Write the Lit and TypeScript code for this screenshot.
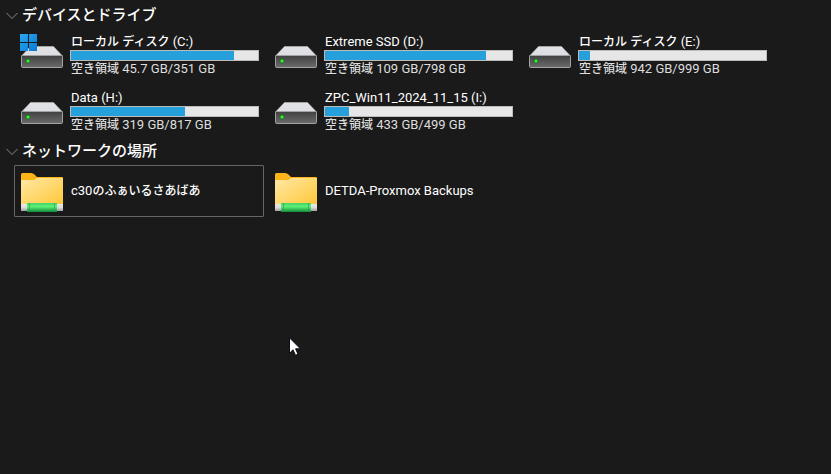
import { LitElement, html, css, svg, nothing } from "lit";
import { customElement, property, state } from "lit/decorators.js";
import { styleMap } from "lit/directives/style-map.js";

interface Drive {
  name: string;
  free: number;
  total: number;
  system?: boolean;
}

const DRIVES: Drive[] = [
  { name: "ローカル ディスク (C:)", free: 45.7, total: 351, system: true },
  { name: "Extreme SSD (D:)", free: 109, total: 798 },
  { name: "ローカル ディスク (E:)", free: 942, total: 999 },
  { name: "Data (H:)", free: 319, total: 817 },
  { name: "ZPC_Win11_2024_11_15 (I:)", free: 433, total: 499 },
];

const PLACES = ["c30のふぁいるさあばあ", "DETDA-Proxmox Backups"];

/** Wraps the Japanese runs of a label, which are set smaller and heavier than the Latin ones. */
const label = (text: string) =>
  text
    .split(/([\u3040-\u30ff\u4e00-\u9fff]+)/)
    .filter((run) => run)
    .map((run) => (run.charCodeAt(0) > 0x3000 ? html`<span class="ja">${run}</span>` : run));

const tileStyles = css`
  :host {
    display: block;
  }
  .tile {
    box-sizing: border-box;
    width: 100%;
    min-height: 52px;
    display: flex;
    align-items: center;
    gap: 6px;
    padding: 0 4px 0 5px;
    border: 1px solid transparent;
    border-radius: 1px;
    background: none;
    color: #fff;
    font: inherit;
    text-align: left;
  }
  .tile.focused {
    border-color: #666;
  }
  .icon {
    flex: none;
    width: 44px;
    height: 44px;
  }
  .text {
    flex: 1;
    min-width: 0;
    display: flex;
    flex-direction: column;
  }
  .line {
    height: 16px;
    line-height: 16px;
    padding-left: 1px;
    white-space: pre;
  }
  .ja {
    font-size: 12px;
    font-weight: 500;
  }
`;

@customElement("drive-tile")
export class DriveTile extends LitElement {
  @property({ attribute: false }) drive!: Drive;

  static styles = [
    tileStyles,
    css`
      .bar {
        box-sizing: border-box;
        height: 11px;
        border: 1px solid #bcbcbc;
        background: #e6e6e6;
      }
      .fill {
        height: 100%;
        background: #26a0da;
      }
      .free {
        color: #dedede;
      }
    `,
  ];

  render() {
    const { name, free, total, system } = this.drive;
    const used = Math.round(((total - free) / total) * 100);
    return html`
      <button class="tile">
        <svg class="icon" viewBox="0 0 44 44" aria-hidden="true">
          <defs>
            <linearGradient id="front" x1="0" y1="0" x2="0" y2="1">
              <stop offset="0" stop-color="#404040" />
              <stop offset="1" stop-color="#6c6c6c" />
            </linearGradient>
            <linearGradient id="top" x1="0" y1="0" x2="0" y2="1">
              <stop offset="0" stop-color="#e2e3e6" />
              <stop offset="1" stop-color="#dcdee2" />
            </linearGradient>
            <linearGradient id="win" x1="0" y1="0" x2="1" y2="1">
              <stop offset="0" stop-color="#29abf0" />
              <stop offset="1" stop-color="#0a78d4" />
            </linearGradient>
          </defs>
          <path d="M10.500 13.500H33.500L42.500 23H1.500Z" fill="url(#top)" stroke="#b9babc" stroke-width=".6" />
          <rect x="1.500" y="22.500" width="41" height="12" rx="1" fill="url(#front)" stroke="#a3a3a3" />
          <circle cx="8" cy="28" r="2.400" fill="#1c7a1c" />
          <circle cx="8" cy="28" r="1.500" fill="#3df03d" />
          ${system
            ? svg`<path d="M0 1H8V9H0ZM9 1H17V9H9ZM0 10H8V18H0ZM9 10H17V18H9Z" fill="url(#win)" />`
            : nothing}
        </svg>
        <span class="text">
          <span class="line">${label(name)}</span>
          <span class="bar" role="meter" aria-label="使用領域" aria-valuemin="0" aria-valuemax="100" aria-valuenow=${used}>
            <div class="fill" style=${styleMap({ width: `${used}%` })}></div>
          </span>
          <span class="line free">${label(`空き領域 ${free} GB/${total} GB`)}</span>
        </span>
      </button>
    `;
  }
}

@customElement("place-tile")
export class PlaceTile extends LitElement {
  @property() name = "";
  @property({ type: Boolean }) focused = false;

  static styles = tileStyles;

  render() {
    return html`
      <button class="tile ${this.focused ? "focused" : ""}">
        <svg class="icon" viewBox="0 0 44 44" aria-hidden="true">
          <defs>
            <linearGradient id="body" x1="0" y1="0" x2="1" y2="1">
              <stop offset="0" stop-color="#ffe9a6" />
              <stop offset="1" stop-color="#ffc737" />
            </linearGradient>
            <linearGradient id="pipe" x1="0" y1="0" x2="0" y2="1">
              <stop offset="0" stop-color="#45d468" />
              <stop offset=".4" stop-color="#5cf078" />
              <stop offset="1" stop-color="#108a3c" />
            </linearGradient>
            <linearGradient id="cap" x1="0" y1="0" x2="0" y2="1">
              <stop offset="0" stop-color="#e8e8e8" />
              <stop offset=".5" stop-color="#dcdcdc" />
              <stop offset="1" stop-color="#a0a0a0" />
            </linearGradient>
          </defs>
          <path d="M1 12V5.500Q1 4 2.500 4H11Q13 4 14.500 5.500L17 8H42Q43 8 43 9V14H1Z" fill="#fbb519" />
          <path d="M1 12Q1 11 2 11H13Q15 11 16 10L17 9H43V36H1Z" fill="url(#body)" />
          <rect x="1" y="35" width="42" height="7" fill="url(#cap)" />
          <rect x="7" y="34" width="30" height="9" fill="url(#pipe)" />
          <path d="M9.500 34V43M34.500 34V43" stroke="#1ea04a" stroke-opacity=".6" />
        </svg>
        <span class="text"><span class="line">${label(this.name)}</span></span>
      </button>
    `;
  }
}

@customElement("group-section")
export class GroupSection extends LitElement {
  @property() heading = "";
  @state() private open = true;

  static styles = css`
    :host {
      display: block;
    }
    .heading {
      margin: 0;
      font: inherit;
    }
    .toggle {
      display: flex;
      align-items: center;
      gap: 4px;
      height: 28px;
      padding: 0 6px;
      border: 0;
      background: none;
      color: #fff;
      font: inherit;
      font-size: 15px;
      line-height: 20px;
      font-weight: 500;
    }
    .chevron {
      width: 12px;
      height: 12px;
      fill: none;
      stroke: #8a8a8a;
    }
    .items {
      display: grid;
      grid-template-columns: repeat(auto-fill, 250px);
      gap: 4px;
      padding-left: 14px;
    }
  `;

  render() {
    return html`
      <h2 class="heading">
        <button class="toggle" aria-expanded=${this.open} @click=${() => (this.open = !this.open)}>
          <svg class="chevron" viewBox="0 0 12 12" aria-hidden="true"><path d="M.5 4L6 9.500L11.500 4" /></svg>
          ${this.heading}
        </button>
      </h2>
      ${this.open ? html`<div class="items"><slot></slot></div>` : nothing}
    `;
  }
}

@customElement("app-root")
export class AppRoot extends LitElement {
  static styles = css`
    :host {
      display: block;
      box-sizing: border-box;
      min-height: 100vh;
      padding-top: 1px;
      background: #1a1a1a;
      color: #fff;
      font-family: Roboto, "Noto Sans CJK JP", sans-serif;
      font-size: 13px;
    }
    .pointer {
      position: absolute;
      left: 289px;
      top: 337px;
      width: 12px;
      height: 19px;
    }
  `;

  render() {
    return html`
      <main>
        <group-section heading="デバイスとドライブ">
          ${DRIVES.map((d) => html`<drive-tile .drive=${d}></drive-tile>`)}
        </group-section>
        <group-section heading="ネットワークの場所">
          ${PLACES.map((name, i) => html`<place-tile .name=${name} ?focused=${i === 0}></place-tile>`)}
        </group-section>
      </main>
      <svg class="pointer" viewBox="0 0 12 19" aria-hidden="true">
        <path d="M.5 .8V16.300L4 12.800L6.500 18.300L9 17.200L6.600 11.800H11.400Z" fill="#fff" stroke="#0c0c18" />
      </svg>
    `;
  }
}
